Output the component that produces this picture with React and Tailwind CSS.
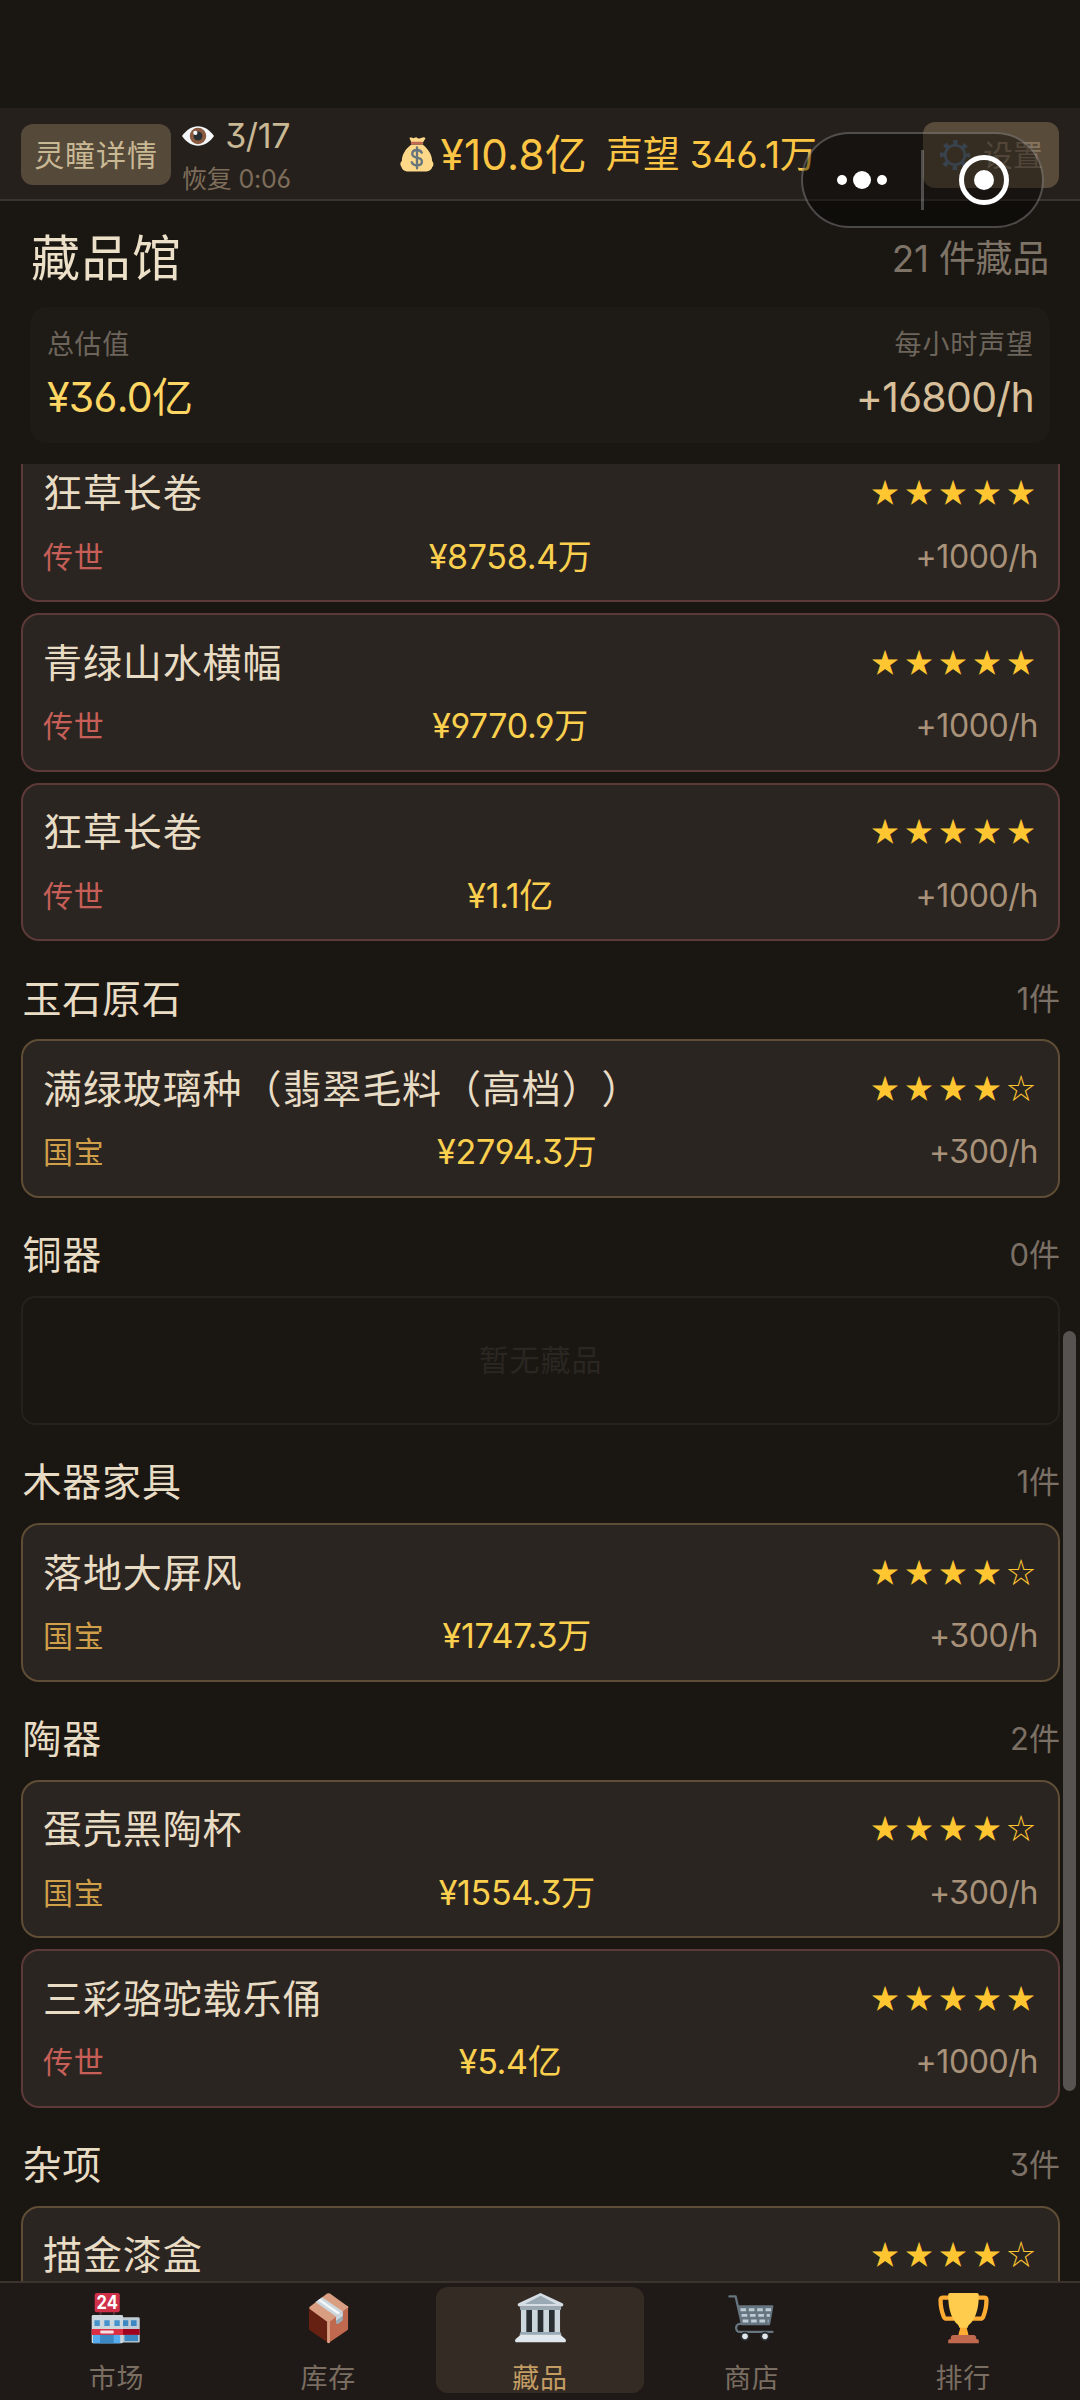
const rarityStyle = {
  传世: { text: 'text-[#c65f57]', border: 'border-[#5c3a38]' },
  国宝: { text: 'text-[#d09f49]', border: 'border-[#5f4d35]' },
};

const sections = [
  {
    items: [
      { name: '狂草长卷', rarity: '传世', price: '¥8758.4万', stars: 5, rate: '+1000/h' },
      { name: '青绿山水横幅', rarity: '传世', price: '¥9770.9万', stars: 5, rate: '+1000/h' },
      { name: '狂草长卷', rarity: '传世', price: '¥1.1亿', stars: 5, rate: '+1000/h' },
    ],
  },
  {
    title: '玉石原石',
    count: 1,
    items: [
      { name: '满绿玻璃种（翡翠毛料（高档））', rarity: '国宝', price: '¥2794.3万', stars: 4, rate: '+300/h' },
    ],
  },
  { title: '铜器', count: 0, items: [] },
  {
    title: '木器家具',
    count: 1,
    items: [{ name: '落地大屏风', rarity: '国宝', price: '¥1747.3万', stars: 4, rate: '+300/h' }],
  },
  {
    title: '陶器',
    count: 2,
    items: [
      { name: '蛋壳黑陶杯', rarity: '国宝', price: '¥1554.3万', stars: 4, rate: '+300/h' },
      { name: '三彩骆驼载乐俑', rarity: '传世', price: '¥5.4亿', stars: 5, rate: '+1000/h' },
    ],
  },
  {
    title: '杂项',
    count: 3,
    items: [{ name: '描金漆盒', rarity: '国宝', stars: 4 }],
  },
];

function EyeIcon() {
  return (
    <svg viewBox="0 0 36 22" className="w-8 h-5 shrink-0">
      <path d="M0 11C5 4 11 0 18 0s13 4 18 11c-5 7-11 11-18 11S5 18 0 11z" fill="#f5f8fa" />
      <circle cx="18" cy="11" r="9.3" fill="#8a5a40" />
      <circle cx="18" cy="11" r="5" fill="#292f33" />
      <circle cx="15" cy="7.6" r="2.4" fill="#f5f8fa" />
    </svg>
  );
}

function MoneyBagIcon() {
  return (
    <svg viewBox="0 0 36 38" className="w-[34px] h-[37px] shrink-0">
      <path d="M12 6 10 1.5c2-1.6 3.4.8 5 0s2.200-1 3.500 0 3 .5 4.500-.2 3-.8 4 .5L24.500 6z" fill="#fdd888" />
      <path d="M12 8.500h12c6 5 10 11 10 17.500 2 2 1.600 5 0 6.500C33 36 30 37 27 37H9c-4 0-7-2-7.500-5C-.5 30 .5 27 2 26 2 19 6 13 12 8.500z" fill="#fdd888" />
      <rect x="11.500" y="5.500" width="13" height="3" rx="1.500" fill="#bf6952" />
      <path
        d="M23 17c-1-2-3-2.800-5-2.800-3 0-5 1.500-5 4s2 3.500 5 4.100 5.200 1.600 5.200 4.200-2.200 4-5.200 4c-2.600 0-4.600-1-5.500-3.200M18 11.500v22"
        fill="none"
        stroke="#67757f"
        strokeWidth="2.500"
        strokeLinecap="round"
      />
    </svg>
  );
}

function GearIcon() {
  return (
    <svg viewBox="0 0 36 36" className="w-8 h-8 shrink-0" fill="none" stroke="#5f7080">
      <circle cx="18" cy="18" r="11" strokeWidth="3" />
      <circle cx="18" cy="18" r="14.500" strokeWidth="5" strokeDasharray="5 6.390" strokeDashoffset="2.500" />
    </svg>
  );
}

function MarketIcon() {
  return (
    <svg viewBox="0 0 36 36" className="size-[51px]">
      <path d="M6 13h1.500v3H6zM15.500 13H17v3h-1.500z" fill="#553038" />
      <rect x="2.600" width="17.700" height="13.600" rx="1.500" fill="#cf2f48" />
      <text x="11.400" y="11.500" textAnchor="middle" fontSize="13" fontWeight="700" fontFamily="Inter, sans-serif" textLength="15" lengthAdjust="spacingAndGlyphs" fill="#fff">
        24
      </text>
      <path d="M22 17.200h11.400a1 1 0 0 1 1 1V34a1 1 0 0 1-1 1H22z" fill="#bfcbd4" />
      <rect x=".5" y="15.500" width="22.100" height="20" rx="1" fill="#ccd6dd" />
      <path d="M2.400 19.300h3.800v4H2.400zM9.400 19.300h3.800v4H9.400zM16.500 19.300h3.800v4h-3.800z" fill="#4793cc" />
      <path d="M22.600 19.300h3.700v4h-3.700zM28.200 19.300h4v4h-4z" fill="#3b88c3" />
      <path d="M.5 25.400h22.100v4.200H.5z" fill="#dd2e44" />
      <path d="M22.600 25.400h11.800v4.200H22.600z" fill="#a0041e" />
      <rect x="6.600" y="26.400" width="9.400" height="2.100" rx=".6" fill="#f5dfe3" />
      <path d="M1.400 29.600h19.200v5.900H1.400z" fill="#55acee" />
      <path d="M6.400 29.600H16v5.900H6.400z" fill="#3b88c3" />
      <path d="M23.600 29.600h9.600v4.400h-9.600z" fill="#3b88c3" />
    </svg>
  );
}

function BoxIcon() {
  return (
    <svg viewBox="0 0 36 36" className="size-[51px]">
      <path d="M4.200 10.200 18 20.500V35.300L5 26.500a2 2 0 0 1-.8-1.500z" fill="#662113" />
      <path d="M31.800 10.200 18 20.500v14.800l13-8.800a2 2 0 0 0 .8-1.500z" fill="#c1694f" />
      <path d="M17 .4a2 2 0 0 1 2 0l12 8.600a1 1 0 0 1 0 2L18 21 5 11.500a1.200 1.200 0 0 1 0-2z" fill="#d99e82" />
      <path d="M17 20.500h2v14.600l-1 .4-1-.5z" fill="#d99e82" />
      <path d="M13.500 3 8.800 6.300l14.500 10.200 4.800-3.400z" fill="#ccd6dd" />
      <path d="M12 4.200 10.500 5.200 25 15.300l1.500-1z" fill="#f5f8fa" />
      <path d="m23.300 16.500 4.800-3.400v5.600c0 .5-.2.800-.6 1.100l-2.600 1.900c-.8.500-1.600.2-1.600-.8z" fill="#99aab5" />
      <path d="m23.300 16.500 4.800-3.400v3l-4.800 3.400z" fill="#ccd6dd" />
    </svg>
  );
}

function MuseumIcon() {
  return (
    <svg viewBox="0 0 36 36" className="size-[51px]">
      <path d="M4.200 10h27.600v19H4.200z" fill="#ccd6dd" />
      <path d="M8 11h4v17H8zM16 11h4v17h-4zM24 11h4v17h-4z" fill="#292f33" />
      <path d="M3.500 9.500h29v1.800c0 .4-.3.700-.7.700H4.200c-.4 0-.7-.3-.7-.7zM4 27.500h28l1 2.300H3z" fill="#99aab5" />
      <path d="M18 0 33.500 7.200c.6.300.7 1 .5 1.600-.2.500-.6.700-1 .7H3c-.5 0-.9-.3-1-.8-.2-.6 0-1.200.5-1.500z" fill="#d5dee4" />
      <path d="M18 2 29 7.800H7z" fill="#99aab5" />
      <path d="M4 29.500h28l3.500 3c.8 1 .5 2.300-.7 2.300H1.200c-1.200 0-1.500-1.300-.7-2.300z" fill="#e1e8ed" />
    </svg>
  );
}

function CartIcon() {
  return (
    <svg viewBox="0 0 36 36" className="size-[51px]">
      <path d="M2.400 2.400h4.400l4.400 19.400H9.800c-3.500 0-3.600 5.700 0 5.700h23" fill="none" stroke="#66757f" strokeWidth="1.600" strokeLinecap="round" strokeLinejoin="round" />
      <path d="M8.600 8.700h23.900c.6 0 1 .5.900 1L31.200 22c-.1.500-.4.700-.9.700H11z" fill="#66757f" />
      <path
        d="M10.200 11.800h21.600M11 15.800h20M11.800 19.800h18.200"
        stroke="#bdcbd6"
        strokeWidth="2.100"
        strokeDasharray="4 1.900"
      />
      <circle cx="13.400" cy="30.600" r="3.300" fill="#292f33" />
      <circle cx="27.500" cy="30.600" r="3.300" fill="#292f33" />
      <circle cx="13.400" cy="30.600" r="2" fill="#e1e8ed" />
      <circle cx="27.500" cy="30.600" r="2" fill="#e1e8ed" />
    </svg>
  );
}

function TrophyIcon() {
  return (
    <svg viewBox="0 0 36 36" className="size-[51px]">
      <path
        d="M9 3.200H3.500c-1 0-1.700.6-1.700 1.600 0 4.500.8 8.500 2.300 12 .4.900 1 1.300 1.900 1.300h5.500M27 3.200h5.500c1 0 1.700.6 1.700 1.600 0 4.500-.8 8.500-2.300 12-.4.900-1 1.300-1.900 1.300h-5.500"
        fill="none"
        stroke="#ffac33"
        strokeWidth="3"
      />
      <path d="M16 21h4c0 5 1.500 6.500 1.500 9h-7c0-2.500 1.500-4 1.500-9z" fill="#ffac33" />
      <path d="M8.500 0h19c.8 0 1.300.6 1.300 1.300 0 8-1.300 13.700-4.300 18.200-1.700 2.500-3.500 3-3.500 5h-6c0-2-1.800-2.500-3.500-5C8.500 15 7.200 9.300 7.200 1.300 7.200.6 7.700 0 8.500 0z" fill="#ffcc4d" />
      <path d="M11 29.600h14c1.200 0 2 .8 2 2v1h.8c.7 0 1 .5 1 1v1.800H7.200v-1.800c0-.5.400-1 1-1H9v-1c0-1.200.8-2 2-2z" fill="#c1694f" />
    </svg>
  );
}

const tabs = [
  { label: '市场', Icon: MarketIcon },
  { label: '库存', Icon: BoxIcon },
  { label: '藏品', Icon: MuseumIcon, active: true },
  { label: '商店', Icon: CartIcon },
  { label: '排行', Icon: TrophyIcon },
];

function TopBar() {
  return (
    <header className="h-[93px] shrink-0 flex items-center justify-between px-[21px] pt-0.5 bg-[#26201c] border-b-2 border-[#3a342e]">
      <div className="flex items-center gap-[11px]">
        <button className="w-[150px] h-[61px] rounded-xl bg-[#55493a] text-[#c9b894] text-[30px] tracking-[0.9px]">
          灵瞳详情
        </button>
        <div className="w-[108px] flex flex-col gap-4 pt-0.5">
          <div className="flex items-center justify-between h-[30px]">
            <EyeIcon />
            <span className="text-[34px] tracking-[-0.4px] text-[#c9b894]">3/17</span>
          </div>
          <div className="h-6 text-[25px] leading-6 tracking-[-0.2px] text-[#7d6d5a] whitespace-nowrap">恢复 0:06</div>
        </div>
      </div>
      <div className="w-[414px] flex items-center whitespace-nowrap text-[#fcc644]">
        <MoneyBagIcon />
        <span className="ml-[7px] text-[42px] tracking-[0.3px]">¥10.8亿</span>
        <span className="ml-[19px] text-[37px] tracking-[-0.2px]">声望 346.1万</span>
      </div>
      <button className="w-[136px] h-[66px] rounded-xl bg-[#594b3a] flex items-center justify-center gap-3 text-[30px] text-[#87765f]">
        <GearIcon />
        设置
      </button>
    </header>
  );
}

// native mini-program capsule floating above the page
function Capsule() {
  return (
    <div className="absolute top-[132px] left-[801px] w-[243px] h-24 rounded-full border-[2.5px] border-white/25 bg-black/40 flex items-center">
      <div className="w-[118px] flex items-center justify-center gap-[6px]">
        <span className="size-[10px] rounded-full bg-white" />
        <span className="size-[18px] rounded-full bg-white" />
        <span className="size-[10px] rounded-full bg-white" />
      </div>
      <span className="w-[3px] h-[60px] bg-white/25" />
      <div className="flex-1 flex justify-center pl-0.5">
        <span className="size-[50px] rounded-full border-[5px] border-white flex items-center justify-center">
          <span className="size-5 rounded-full bg-white" />
        </span>
      </div>
    </div>
  );
}

function ItemCard({ item }) {
  const style = rarityStyle[item.rarity];
  return (
    <div className={`h-[158.5px] shrink-0 rounded-[18px] border-2 bg-[#2b2521] pl-5 pr-[20px] pt-[25px] ${style.border}`}>
      <div className="flex items-center justify-between h-[44px]">
        <span className="text-[39px] tracking-[0.9px] text-[#e8dcc4] [text-spacing-trim:space-all]">{item.name}</span>
        <span className="font-['Noto_Sans_CJK_SC',sans-serif] text-[28px] leading-none tracking-[6px] mr-[-3px] pb-[3px] text-[#ffc632]">
          {'★'.repeat(item.stars)}
          {'☆'.repeat(5 - item.stars)}
        </span>
      </div>
      {item.price && (
        <div className="flex items-center justify-between h-[34px] mt-[25px]">
          <span className={`text-[30px] tracking-[0.8px] ${style.text}`}>{item.rarity}</span>
          <span className="text-[34px] tracking-[-0.3px] text-[#fbd04e]">{item.price}</span>
          <span className="text-[32px] tracking-[-0.4px] text-[#a8937a]">{item.rate}</span>
        </div>
      )}
    </div>
  );
}

function Section({ section }) {
  return (
    <section className="shrink-0">
      {section.title && (
        <div className="h-[98.2px] pt-[16px] pl-[1.5px] flex items-center justify-between">
          <h2 className="text-[39px] tracking-[0.8px] text-[#e8dcc4]">{section.title}</h2>
          <span className="text-[31px] text-[#7a7065]">{section.count}件</span>
        </div>
      )}
      {section.items.length > 0 ? (
        <div className="flex flex-col gap-[11px]">
          {section.items.map((item, index) => (
            <ItemCard key={index} item={item} />
          ))}
        </div>
      ) : (
        <div className="h-[129px] rounded-[14px] border-2 border-[#25211d] flex items-center justify-center text-[30px] tracking-[0.9px] text-[#2a2622]">
          暂无藏品
        </div>
      )}
    </section>
  );
}

function TabBar() {
  return (
    <nav className="h-[119px] shrink-0 border-t-2 border-[#3a332e] bg-[#1f1a17] flex justify-center gap-[3.7px] pt-1">
      {tabs.map(({ label, Icon, active }) => (
        <button
          key={label}
          className={`w-[208px] h-[106px] rounded-xl flex flex-col items-center justify-start pt-1.5 gap-5 ${
            active ? 'bg-[#342b25] text-[#c29c63]' : 'text-[#7a6d61]'
          }`}
        >
          <Icon />
          <span className="text-[27px] leading-[29px] tracking-[0.8px]">{label}</span>
        </button>
      ))}
    </nav>
  );
}

export default function App() {
  return (
    <div className="relative w-[1080px] h-[2400px] overflow-hidden flex flex-col bg-[#1a1612] pt-[108px] leading-none font-['Inter','Noto_Sans_CJK_SC',sans-serif] [font-feature-settings:'cv09','cv03','cv04']">
      <TopBar />
      <div className="shrink-0 h-[106px] pt-[8px] px-[31px] flex items-center justify-between">
        <h1 className="text-[49px] tracking-[1.5px] text-[#ece0c8]">藏品馆</h1>
        <span className="text-[37px] tracking-[-0.3px] text-[#7d7366]">21 件藏品</span>
      </div>
      <div className="shrink-0 h-[136px] mx-[30px] mb-[21px] px-[17px] pt-[21px] rounded-2xl bg-[#1e1b16] flex justify-between">
        <div>
          <div className="text-[27px] leading-[33px] tracking-[0.6px] text-[#6d655b]">总估值</div>
          <div className="mt-[14px] text-[41px] leading-[44px] tracking-[-0.7px] text-[#fdd663]">¥36.0亿</div>
        </div>
        <div className="text-right">
          <div className="text-[27px] leading-[33px] tracking-[0.9px] text-[#6d655b] -mr-px">每小时声望</div>
          <div className="mt-[14px] text-[41px] leading-[44px] tracking-[-0.7px] text-[#d6bf99] -mr-px">+16800/h</div>
        </div>
      </div>
      <main className="flex-1 min-h-0 overflow-hidden pl-[21px] pr-5">
        <div className="-mt-[20.500px]">
          {sections.map((section, index) => (
            <Section key={index} section={section} />
          ))}
        </div>
      </main>
      <TabBar />
      <div className="absolute top-[1331px] left-[1063px] w-[13px] h-[760px] rounded-full bg-[#575350]" />
      <Capsule />
    </div>
  );
}
